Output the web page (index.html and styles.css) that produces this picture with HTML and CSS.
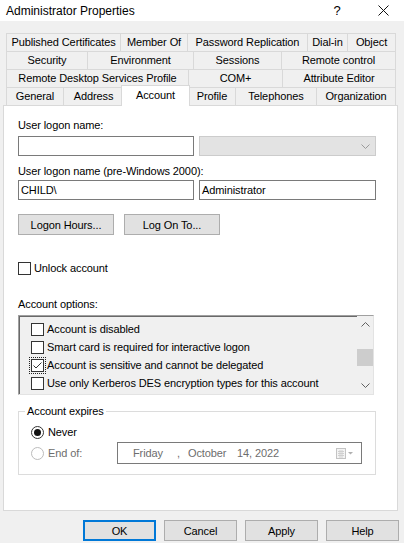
FILE: index.html
```html
<!DOCTYPE html>
<html>
<head>
<meta charset="utf-8">
<title>Administrator Properties</title>
<link rel="stylesheet" href="styles.css">
</head>
<body>
<div class="titlebar">
  <span class="title">Administrator Properties</span>
  <span class="cap help">?</span>
  <span class="cap close"><svg width="11" height="11" viewBox="0 0 11 11"><path d="M0.5 0.5L10.5 10.5M10.5 0.5L0.5 10.5" stroke="#111" stroke-width="1" fill="none"/></svg></span>
</div>
<div class="content">
  <div class="tabs">
    <div class="row r1">
      <div class="tab">Published Certificates</div>
      <div class="tab">Member Of</div>
      <div class="tab">Password Replication</div>
      <div class="tab">Dial-in</div>
      <div class="tab">Object</div>
    </div>
    <div class="row r2">
      <div class="tab">Security</div>
      <div class="tab">Environment</div>
      <div class="tab">Sessions</div>
      <div class="tab">Remote control</div>
    </div>
    <div class="row r3">
      <div class="tab">Remote Desktop Services Profile</div>
      <div class="tab">COM+</div>
      <div class="tab">Attribute Editor</div>
    </div>
    <div class="row r4">
      <div class="tab">General</div>
      <div class="tab">Address</div>
      <div class="tab sel">Account</div>
      <div class="tab">Profile</div>
      <div class="tab">Telephones</div>
      <div class="tab">Organization</div>
    </div>
  </div>
  <div class="panel">
    <div class="lbl">User logon name:</div>
    <div class="fields">
      <div class="edit"></div>
      <div class="combo"><svg width="9" height="5" viewBox="0 0 9 5"><path d="M0.5 0.5L4.5 4.5L8.5 0.5" stroke="#9a9a9a" fill="none"/></svg></div>
    </div>
    <div class="lbl lbl2">User logon name (pre-Windows 2000):</div>
    <div class="fields fields2">
      <div class="edit">CHILD\</div>
      <div class="edit edit2">Administrator</div>
    </div>
    <div class="btnrow">
      <div class="btn wide">Logon Hours...</div>
      <div class="btn wide">Log On To...</div>
    </div>
    <div class="check unlock"><span class="cb"></span><span>Unlock account</span></div>
    <div class="lbl optlbl">Account options:</div>
    <div class="list">
      <div class="items">
        <div class="item"><span class="cb"></span><span>Account is disabled</span></div>
        <div class="item"><span class="cb"></span><span>Smart card is required for interactive logon</span></div>
        <div class="item"><span class="cb focus"><svg width="11" height="11" viewBox="0 0 11 11"><path d="M1.5 5.5L4 8L9.5 2.5" stroke="#333" stroke-width="1" fill="none"/></svg></span><span>Account is sensitive and cannot be delegated</span></div>
        <div class="item"><span class="cb"></span><span>Use only Kerberos DES encryption types for this account</span></div>
      </div>
      <div class="sb">
        <div class="sbbtn"><svg width="9" height="5" viewBox="0 0 9 5"><path d="M0.5 4.5L4.5 0.5L8.5 4.5" stroke="#606060" fill="none"/></svg></div>
        <div class="track"><div class="thumb"></div></div>
        <div class="sbbtn"><svg width="9" height="5" viewBox="0 0 9 5"><path d="M0.5 0.5L4.5 4.5L8.5 0.5" stroke="#606060" fill="none"/></svg></div>
      </div>
    </div>
    <fieldset class="group">
      <legend>Account expires</legend>
      <div class="radiorow never"><span class="radio on"></span><span>Never</span></div>
      <div class="radiorow endof">
        <span class="radio off"></span><span class="endlbl">End of:</span>
        <div class="date">
          <span class="dow">Friday</span><span class="comma">,</span><span class="mon">October</span><span>14, 2022</span>
          <span class="cal"><svg width="18" height="11" viewBox="0 0 18 11"><rect x="0.5" y="0.5" width="9" height="10" fill="#f4f4f4" stroke="#c4c4c4"/><path d="M2 3.5H8M2 5.5H8M2 7.5H8M4 2V10M6 2V10" stroke="#d0d0d0"/><path d="M12 4H17L14.5 6.5Z" fill="#b0b0b0"/></svg></span>
        </div>
      </div>
    </fieldset>
  </div>
</div>
<div class="dlgbtns">
  <div class="btn def">OK</div>
  <div class="btn">Cancel</div>
  <div class="btn">Apply</div>
  <div class="btn">Help</div>
</div>
</body>
</html>
```
FILE: styles.css
```css
* { box-sizing: border-box; }
html, body { margin: 0; padding: 0; }
body {
  width: 404px;
  height: 543px;
  overflow: hidden;
  background: #f0f0f0;
  font-family: "Liberation Sans", Arial, sans-serif;
  font-size: 11px;
  letter-spacing: -0.1px;
  color: #000;
}
.titlebar {
  height: 21px;
  background: #fff;
  display: flex;
  align-items: center;
}
.title { flex: 1; padding-left: 6px; font-size: 12px; letter-spacing: 0; }
.cap { width: 46px; height: 21px; display: flex; align-items: center; justify-content: center; }
.help { font-size: 13px; }
.close { margin-right: -2px; }

.content { padding: 12px 7px 0 3px; }
.tabs { padding-left: 3px; }
.row { display: grid; height: 18px; }
.r1 { grid-template-columns: 114px 67px 120px 40px 49px; }
.r2 { grid-template-columns: 81px 106px 88px 115px; }
.r3 { grid-template-columns: 182px 94px 114px; }
.r4 { grid-template-columns: 57px 60px 65px 47px 81px 80px; }
.tab {
  border-top: 1px solid #d9d9d9;
  border-left: 1px solid #d9d9d9;
  background: #f0f0f0;
  text-align: center;
  line-height: 17px;
  white-space: nowrap;
  overflow: hidden;
}
.tab:last-child { border-right: 1px solid #d9d9d9; }
.tab.sel {
  background: #fff;
  margin: -2px -2px -1px;
  border-right: 1px solid #d9d9d9;
  line-height: 18px;
  z-index: 1;
}

.panel {
  width: 395px;
  height: 406px;
  border: 1px solid #d9d9d9;
  background: #fff;
  padding: 12px 0 0 14px;
}
.lbl { height: 14px; line-height: 14px; }
.fields { display: flex; gap: 5px; margin-top: 4px; }
.edit {
  width: 176px;
  height: 20px;
  border: 1px solid #7a7a7a;
  background: #fff;
  padding-left: 2px;
  line-height: 18px;
}
.edit2 { width: 177px; }
.combo {
  width: 177px;
  height: 20px;
  border: 1px solid #cccccc;
  background: #e3e3e3;
  display: flex;
  justify-content: flex-end;
  align-items: center;
  padding-right: 5px;
}
.lbl2 { margin-top: 8px; }
.fields2 { margin-top: 2px; }
.btnrow { display: flex; gap: 10px; margin-top: 14px; }
.btn {
  width: 73px;
  height: 21px;
  border: 1px solid #adadad;
  background: #e1e1e1;
  display: flex;
  align-items: center;
  justify-content: center;
}
.btn.wide { width: 96px; }
.btn.def { border-color: #0078d7; box-shadow: inset 0 0 0 1px #0078d7; }

.check { display: flex; align-items: center; gap: 3px; height: 14px; }
.unlock { margin-top: 26px; }
.cb {
  width: 13px;
  height: 13px;
  border: 1px solid #333;
  background: #fff;
  display: inline-flex;
  align-items: center;
  justify-content: center;
  flex: none;
}
.cb.focus { outline: 1px dotted #222; outline-offset: 1px; }
.optlbl { margin-top: 22px; }

.list {
  margin-top: 4px;
  width: 356px;
  height: 80px;
  border: 1px solid;
  border-color: #a0a0a0 #e3e3e3 #e3e3e3 #a0a0a0;
  box-shadow: inset 1px 1px 0 #696969;
  background: #f0f0f0;
  display: flex;
}
.items { flex: 1; padding: 4px 0 0 12px; }
.item { height: 18px; display: flex; align-items: center; gap: 3px; white-space: nowrap; }
.sb { width: 16px; display: flex; flex-direction: column; background: #f0f0f0; }
.sbbtn { height: 17px; display: flex; align-items: center; justify-content: center; }
.track { flex: 1; padding-top: 16px; }
.thumb { height: 17px; background: #cdcdcd; }

.group {
  margin: 9px 0 0 0;
  width: 358px;
  border: 1px solid #dcdcdc;
  padding: 0 0 10px 12px;
  min-width: 0;
}
.group legend { padding: 0 2px; margin-left: -6px; line-height: 14px; height: 14px; }
.radiorow { display: flex; align-items: center; gap: 4px; }
.never { height: 14px; margin-top: 7px; }
.endof { height: 22px; margin-top: 3px; }
.radio {
  width: 13px;
  height: 13px;
  border-radius: 50%;
  border: 1px solid #333;
  background: #fff;
  flex: none;
  display: inline-flex;
  align-items: center;
  justify-content: center;
}
.radio.on::after { content: ""; width: 7px; height: 7px; border-radius: 50%; background: #111; }
.radio.off { border-color: #bcbcbc; }
.endlbl { width: 65px; color: #6d6d6d; }
.date {
  width: 245px;
  height: 22px;
  border: 1px solid #7a7a7a;
  background: #fff;
  color: #6d6d6d;
  display: flex;
  align-items: center;
  padding: 0 7px 0 15px;
  white-space: nowrap;
}
.dow { width: 44px; }
.comma { width: 11px; }
.mon { width: 49px; }
.cal { margin-left: auto; display: flex; }

.dlgbtns {
  display: flex;
  justify-content: flex-end;
  gap: 8px;
  padding-right: 5px;
  margin-top: 9px;
}
```
